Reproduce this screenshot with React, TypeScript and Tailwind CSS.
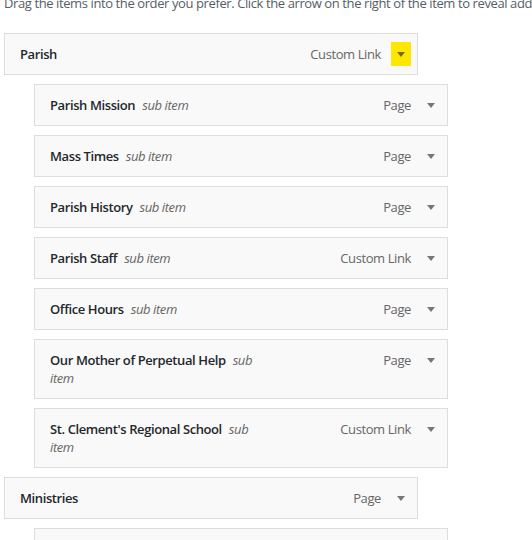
import { ReactNode } from "react";

type Item = {
  title: string;
  type: string;
  sub?: boolean;
  active?: boolean;
};

const items: Item[] = [
  { title: "Parish", type: "Custom Link", active: true },
  { title: "Parish Mission", type: "Page", sub: true },
  { title: "Mass Times", type: "Page", sub: true },
  { title: "Parish History", type: "Page", sub: true },
  { title: "Parish Staff", type: "Custom Link", sub: true },
  { title: "Office Hours", type: "Page", sub: true },
  { title: "Our Mother of Perpetual Help", type: "Page", sub: true },
  { title: "St. Clement's Regional School", type: "Custom Link", sub: true },
  { title: "Ministries", type: "Page" },
  { title: "", type: "", sub: true },
];

function Arrow({ active }: { active?: boolean }) {
  return (
    <span
      className={
        "flex h-[24px] w-[20px] items-center justify-center " +
        (active ? "bg-[#ffe600]" : "")
      }
    >
      <svg width="8" height="5" viewBox="0 0 8 5">
        <path d="M0 0h8L4 5z" fill={active ? "#6f6c14" : "#72777c"} />
      </svg>
    </span>
  );
}

function MenuItem({ item }: { item: Item }): ReactNode {
  return (
    <div className={"w-[414px] " + (item.sub ? "ml-[30px]" : "")}>
      <div className="relative flex min-h-[42px] border border-[#dddddd] bg-[#f9f9f9] pl-[15px] pr-[6px]">
        <div className="max-w-[218px] flex-1 py-[11px] text-[13px] leading-[18px] font-semibold text-[#23282d]">
          {item.title}
          {item.sub && item.title && (
            <span className="ml-[4px] font-normal italic text-[#666666]"> sub item</span>
          )}
        </div>
        {item.type && (
          <div className="ml-auto flex items-start gap-[10px] pt-[8px]">
            <span className="pt-[3px] text-[13px] leading-[18px] text-[#666666]">{item.type}</span>
            <Arrow active={item.active} />
          </div>
        )}
      </div>
    </div>
  );
}

export default function App() {
  return (
    <div className="h-[540px] overflow-hidden bg-white pl-[4px] font-['Open_Sans',sans-serif] tracking-[-0.4px]">
      <p className="-mt-[7px] whitespace-nowrap text-[13px] leading-[20px] text-[#555d66]">
        Drag the items into the order you prefer. Click the arrow on the right of the item to reveal additional configuration options.
      </p>
      <div className="mt-[20px] flex flex-col gap-[9px]">
        {items.map((item, i) => (
          <MenuItem key={i} item={item} />
        ))}
      </div>
    </div>
  );
}
